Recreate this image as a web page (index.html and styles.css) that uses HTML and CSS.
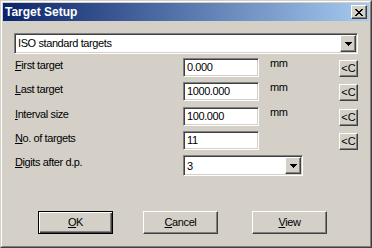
FILE: index.html
```html
<!DOCTYPE html>
<html lang="en">

<head>
    <meta charset="UTF-8">
    <title>Target Setup</title>
    <link rel="stylesheet" href="styles.css">
</head>

<body>
    <div class="window">
        <div class="frame">
            <div class="titlebar">
                <span class="title">Target Setup</span>
                <button class="close raised" title="Close">
                    <svg width="8" height="7" viewBox="0 0 8 7">
                        <path d="M0 0h2v1h-2z M6 0h2v1h-2z M1 1h2v1h-2z M5 1h2v1h-2z M2 2h4v1h-4z M3 3h2v1h-2z M2 4h4v1h-4z M1 5h2v1h-2z M5 5h2v1h-2z M0 6h2v1h-2z M6 6h2v1h-2z" fill="#000"/>
                    </svg>
                </button>
            </div>

            <div class="content">
                <div class="combo sunken">
                    <span class="combo-text">ISO standard targets</span>
                    <span class="drop raised">
                        <svg width="7" height="4" viewBox="0 0 7 4">
                            <path d="M0 0h7v1h-7z M1 1h5v1h-5z M2 2h3v1h-3z M3 3h1v1h-1z" fill="#000"/>
                        </svg>
                    </span>
                </div>

                <div class="fields">
                    <label class="lbl"><u>F</u>irst target</label>
                    <div class="edit sunken">0.000</div>
                    <span class="unit">mm</span>
                    <button class="clr raised">&lt;C</button>

                    <label class="lbl"><u>L</u>ast target</label>
                    <div class="edit sunken">1000.000</div>
                    <span class="unit">mm</span>
                    <button class="clr raised">&lt;C</button>

                    <label class="lbl"><u>I</u>nterval size</label>
                    <div class="edit sunken">100.000</div>
                    <span class="unit">mm</span>
                    <button class="clr raised">&lt;C</button>

                    <label class="lbl"><u>N</u>o. of targets</label>
                    <div class="edit sunken">11</div>
                    <span class="unit"></span>
                    <button class="clr raised">&lt;C</button>

                    <label class="lbl"><u>D</u>igits after d.p.</label>
                    <div class="combo digits sunken">
                        <span class="combo-text">3</span>
                        <span class="drop raised">
                            <svg width="7" height="4" viewBox="0 0 7 4">
                                <path d="M0 0h7v1h-7z M1 1h5v1h-5z M2 2h3v1h-3z M3 3h1v1h-1z" fill="#000"/>
                            </svg>
                        </span>
                    </div>
                </div>

                <div class="actions">
                    <button class="btn default"><u>O</u>K</button>
                    <button class="btn raised"><u>C</u>ancel</button>
                    <button class="btn raised view"><u>V</u>iew</button>
                </div>
            </div>
        </div>
    </div>
</body>

</html>
```

FILE: styles.css
```css
body {
    margin: 0;
    font-family: "Liberation Sans", Arial, sans-serif;
    font-size: 11px;
    line-height: 13px;
    letter-spacing: -0.4px;
    color: #000;
    background-color: #d4d0c8;
}

button {
    font: inherit;
    letter-spacing: inherit;
    color: #000;
    padding: 0;
    margin: 0;
    cursor: pointer;
}

u {
    text-decoration: underline;
    text-underline-offset: 1px;
}

.raised {
    background-color: #d4d0c8;
    border: 1px solid;
    border-color: #fff #404040 #404040 #fff;
    box-shadow: inset -1px -1px #808080, inset 1px 1px #d4d0c8;
    box-sizing: border-box;
}

.sunken {
    background-color: #fff;
    border: 1px solid;
    border-color: #808080 #fff #fff #808080;
    box-shadow: inset 1px 1px #404040, inset -1px -1px #d4d0c8;
    box-sizing: border-box;
}

.window {
    width: 372px;
    height: 248px;
    box-sizing: border-box;
    border: 1px solid;
    border-color: #d4d0c8 #404040 #404040 #d4d0c8;
}

.frame {
    height: 100%;
    box-sizing: border-box;
    border: 1px solid;
    border-color: #fff #808080 #808080 #fff;
    padding: 1px;
    display: flex;
    flex-direction: column;
}

.titlebar {
    height: 18px;
    display: flex;
    align-items: center;
    justify-content: space-between;
    padding: 0 2px 0 2px;
    background: linear-gradient(to right, #0a246a, #a6caf0);
}

.title {
    color: #fff;
    font-weight: bold;
    font-size: 12px;
    letter-spacing: 0;
}

.close {
    width: 16px;
    height: 14px;
    display: flex;
    align-items: center;
    justify-content: center;
}

.content {
    flex: 1;
    padding: 12px 11px 0 11px;
}

.combo {
    height: 21px;
    display: flex;
    align-items: center;
    padding: 1px;
}

.combo-text {
    flex: 1;
    padding-left: 2px;
}

.drop {
    width: 16px;
    height: 17px;
    display: flex;
    align-items: center;
    justify-content: center;
}

.fields {
    margin-top: 4px;
    display: grid;
    grid-template-columns: 169px 76px 1fr 19px;
    grid-template-rows: 24px 25px 24px 24px 21px;
}

.lbl {
    padding: 1px 0 0 1px;
}

.edit {
    height: 19px;
    padding: 2px 0 0 3px;
}

.unit {
    padding-left: 11px;
    margin-top: -1px;
}

.clr {
    width: 19px;
    height: 17px;
    margin-top: 2px;
    letter-spacing: 0;
}

.digits {
    grid-column: 2 / 4;
    width: 120px;
}

.digits .combo-text {
    padding-top: 1px;
}

.actions {
    margin-top: 35px;
    padding-left: 24px;
    display: flex;
    gap: 30px;
}

.btn {
    width: 75px;
    height: 23px;
}

.btn.default {
    background-color: #d4d0c8;
    border: 1px solid #000;
    box-shadow: inset 1px 1px #fff, inset -1px -1px #404040, inset -2px -2px #808080;
    box-sizing: border-box;
}

.btn.view {
    margin-left: 4px;
}
```
